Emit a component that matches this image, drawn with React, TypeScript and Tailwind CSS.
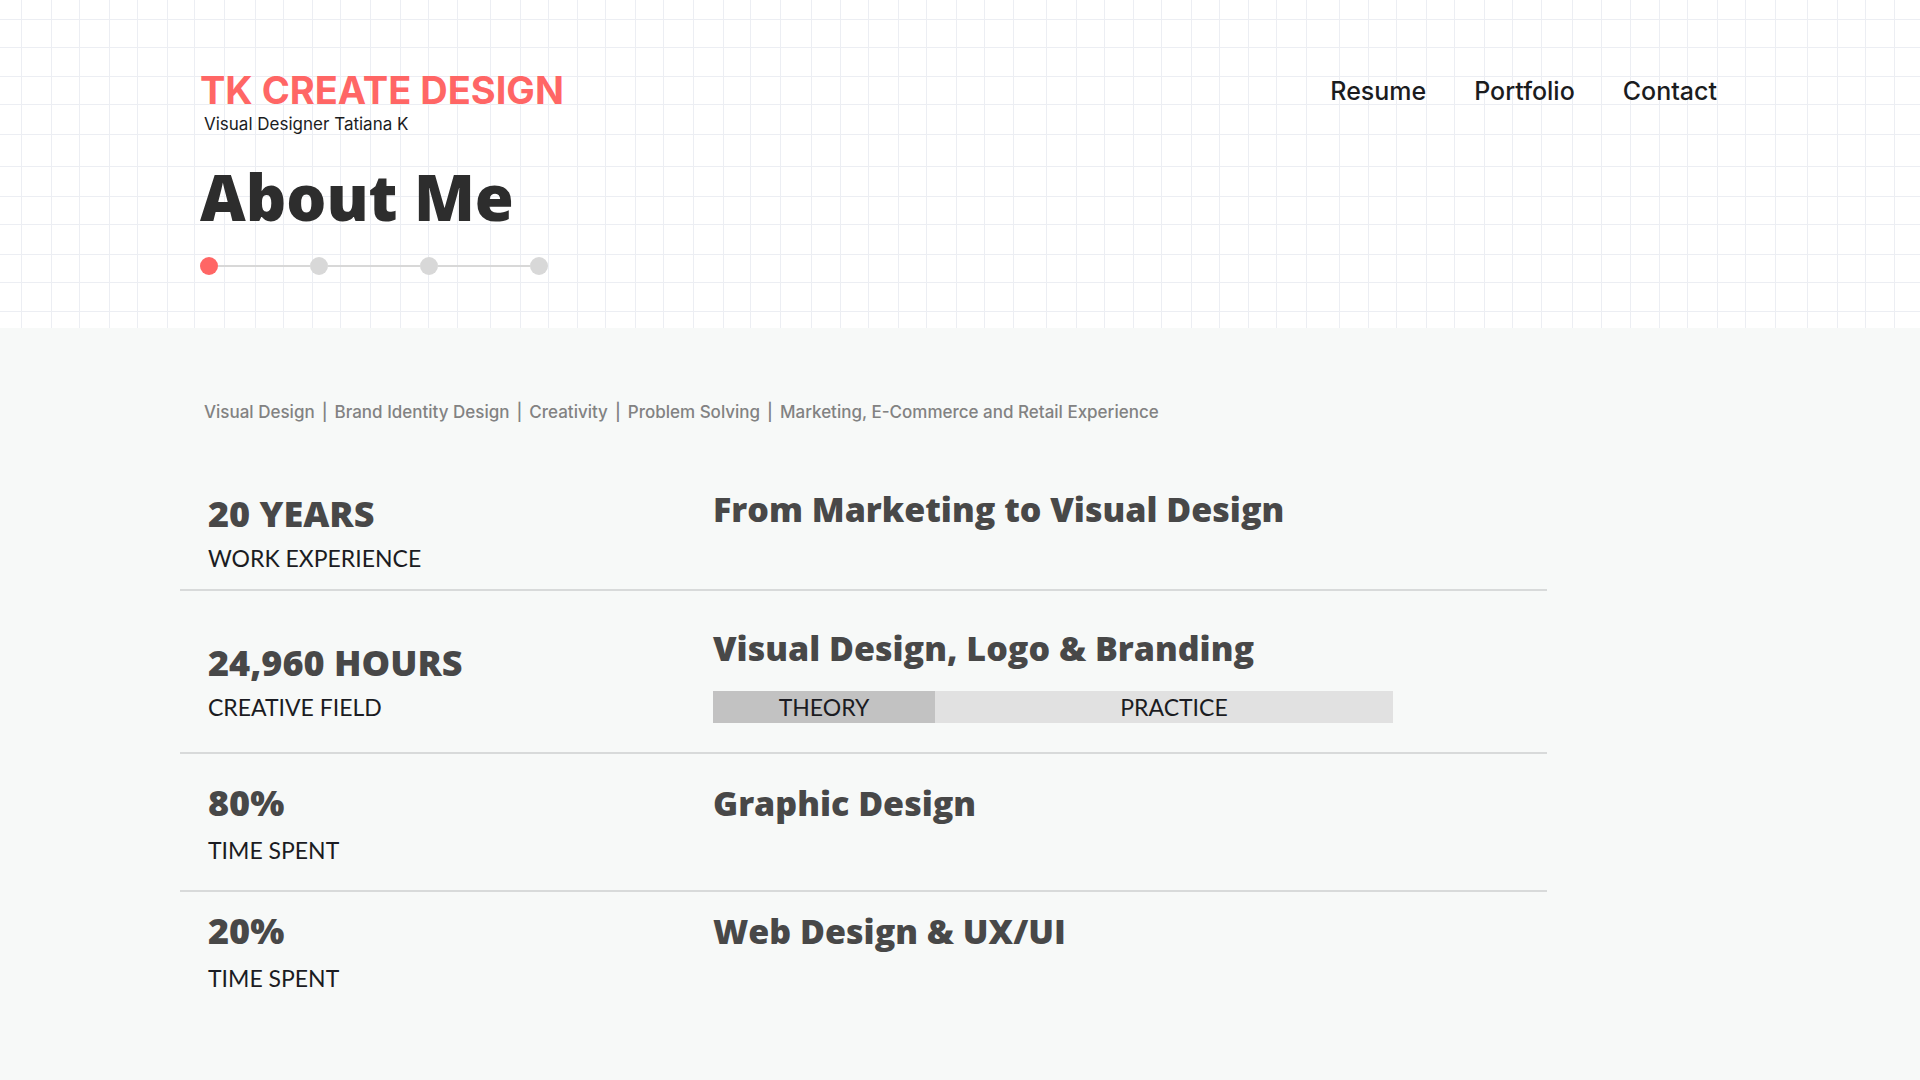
const navLinks = ["Resume", "Portfolio", "Contact"];
const steps = ["About Me", "Experience", "Skills", "Contact"];
const skills = ["Visual Design", "Brand Identity Design", "Creativity", "Problem Solving", "Marketing, E-Commerce and Retail Experience"];

// hand-ruled paper, the spacing is a little uneven on purpose
const columns = [
	21, 51, 79, 109, 137, 167, 194, 224, 255, 283, 312, 340, 370, 400, 428, 457, 490, 520, 548, 577, 605, 635, 663, 693, 723, 750, 780, 811, 840, 868, 898, 926,
	956, 984, 1013, 1046, 1076, 1104, 1133, 1161, 1191, 1219, 1248, 1276, 1306, 1339, 1368, 1396, 1426, 1454, 1484, 1512, 1541, 1572, 1601, 1630, 1659, 1687,
	1717, 1745, 1775, 1807, 1837, 1865, 1894,
];
const rows = [19, 47, 76, 104, 134, 166, 196, 224, 254, 282, 311];

function GridPaper() {
	return (
		<svg className="absolute inset-0 h-full w-full" aria-hidden="true">
			<defs>
				<pattern id="paper" width="1920" height="328" patternUnits="userSpaceOnUse">
					{columns.map((x) => (
						<rect key={x} x={x} y="0" width="1" height="328" fill="#eceef3" />
					))}
					{rows.map((y) => (
						<rect key={y} x="0" y={y} width="1920" height="1" fill="#eceef3" />
					))}
				</pattern>
			</defs>
			<rect width="100%" height="100%" fill="url(#paper)" />
		</svg>
	);
}

function Steps() {
	return (
		<ol className="mt-6 flex w-[348px] items-center">
			{steps.map((step, i) => (
				<li key={step} aria-label={step} className={i === 0 ? "flex items-center" : "flex grow items-center"}>
					{i > 0 && <span className="h-0.5 grow bg-[#d8d8d8]" />}
					<span className={i === 0 ? "size-[18px] rounded-full bg-[#ff6665]" : "size-[18px] rounded-full bg-[#d8d8d8]"} />
				</li>
			))}
		</ol>
	);
}

function Stat({ value, label, gap }: { value: string; label: string; gap: string }) {
	return (
		<div className={`flex flex-col ${gap}`}>
			<p className="font-['Open_Sans'] text-4xl leading-10 font-extrabold text-[#484848]">{value}</p>
			<p className="font-['Lato'] text-[23px] leading-8 text-[#1b1c22]">{label}</p>
		</div>
	);
}

function Title({ children }: { children: string }) {
	return <h2 className="font-['Open_Sans'] text-[34px] leading-10 font-extrabold text-[#484848]">{children}</h2>;
}

function App() {
	return (
		<div className="min-h-screen bg-[#f7f9f8] font-['Inter',sans-serif]">
			<header className="relative h-[328px] bg-white">
				<GridPaper />
				<div className="relative flex justify-between pr-[203px] pl-[200px]">
					<div className="pt-[68px]">
						<p className="text-[38px] leading-[44px] font-bold text-[#ff6665]">TK CREATE DESIGN</p>
						<p className="ml-1 text-[17px] leading-6 text-[#1b1c1e]">Visual Designer Tatiana K</p>
						<h1 className="mt-[25px] font-['Open_Sans'] text-[63px] leading-[72px] font-extrabold text-[#2d2d2d]">About Me</h1>
						<Steps />
					</div>
					<nav className="flex gap-12 pt-[75px] text-[25px] leading-8 font-medium text-[#1b1c1e]">
						{navLinks.map((link) => (
							<a key={link} href={`#${link.toLowerCase()}`}>
								{link}
							</a>
						))}
					</nav>
				</div>
			</header>

			<main className="pt-[72px] pl-[180px]">
				<ul className="flex pl-6 text-[17px] leading-6 font-medium text-[#828282]">
					{skills.map((skill, i) => (
						<li key={skill}>
							{i > 0 && <span className="mx-[7px]">|</span>}
							{skill}
						</li>
					))}
				</ul>
				<div className="mt-[65px] w-[1367px] max-w-full">
					<section className="grid grid-cols-[505px_1fr] border-b-2 border-[#d8dada] pb-[15px] pl-7">
						<div className="pt-[5px]">
							<Stat value="20 YEARS" label="WORK EXPERIENCE" gap="gap-2" />
						</div>
						<Title>From Marketing to Visual Design</Title>
					</section>
					<section className="grid grid-cols-[505px_1fr] border-b-2 border-[#d8dada] pt-[37px] pb-[29px] pl-7">
						<div className="pt-[15px]">
							<Stat value="24,960 HOURS" label="CREATIVE FIELD" gap="gap-2" />
						</div>
						<div>
							<Title>Visual Design, Logo &amp; Branding</Title>
							<div className="mt-[23px] flex w-[680px] text-center font-['Lato'] text-[23px] leading-8 text-[#1b1c22]">
								<div className="w-[222px] bg-[#c2c2c2]">THEORY</div>
								<div className="grow bg-[#e1e1e1] pl-5">PRACTICE</div>
							</div>
						</div>
					</section>
					<section className="grid grid-cols-[505px_1fr] border-b-2 border-[#d8dada] pt-[29px] pb-6 pl-7">
						<Stat value="80%" label="TIME SPENT" gap="gap-[11px]" />
						<Title>Graphic Design</Title>
					</section>
					<section className="grid grid-cols-[505px_1fr] pt-[19px] pl-7">
						<Stat value="20%" label="TIME SPENT" gap="gap-[11px]" />
						<Title>Web Design &amp; UX/UI</Title>
					</section>
				</div>
			</main>
		</div>
	);
}

export default App;
